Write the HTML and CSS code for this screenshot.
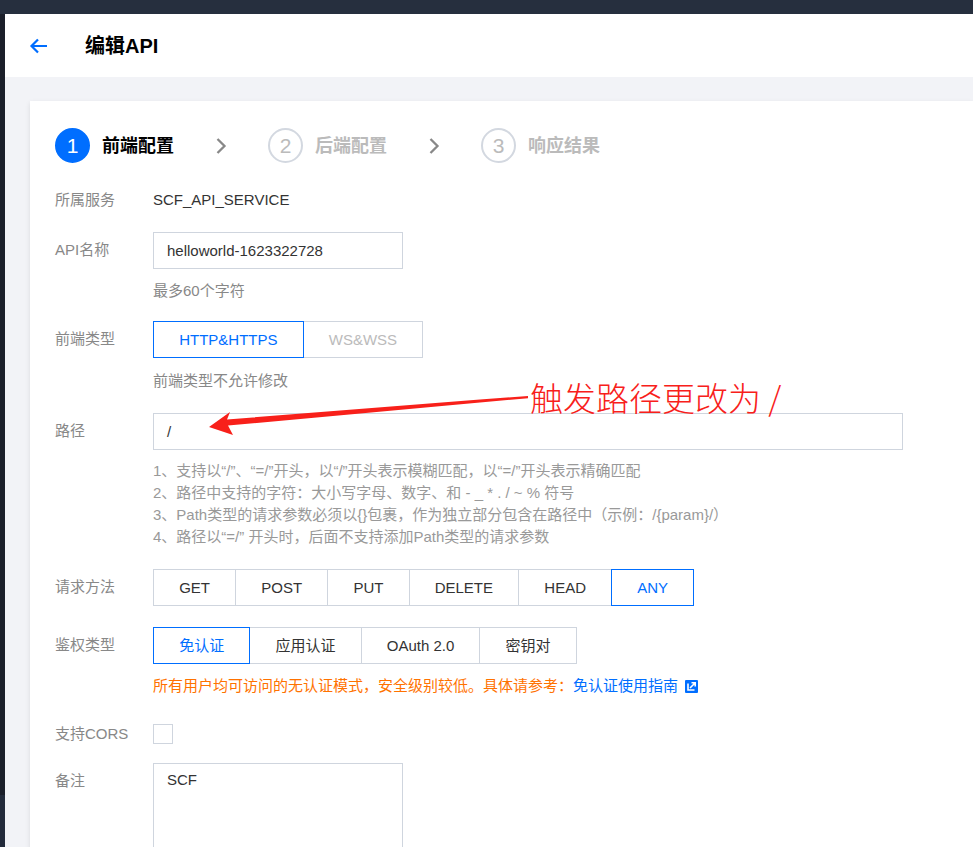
FILE: index.html
```html
<!DOCTYPE html>
<html lang="zh-CN">
<head>
<meta charset="utf-8">
<title>编辑API</title>
<link rel="stylesheet" href="styles.css">
</head>
<body>
<div class="topbar"></div>
<div class="main">
  <div class="strip"></div>
  <div class="content">
    <header class="header">
      <svg class="back" width="20" height="16" viewBox="0 0 20 16"><path d="M18 8H3M9 1.5L2.5 8L9 14.5" fill="none" stroke="#006eff" stroke-width="2.2"/></svg>
      <h1 class="title">编辑API</h1>
    </header>
    <div class="area">
      <div class="card">
        <div class="steps">
          <div class="step active"><span class="num">1</span><span class="stext">前端配置</span></div>
          <svg class="chev" width="12" height="18" viewBox="0 0 12 18"><path d="M2.5 2L9.5 9L2.5 16" fill="none" stroke="#888" stroke-width="2.3"/></svg>
          <div class="step"><span class="num">2</span><span class="stext">后端配置</span></div>
          <svg class="chev" width="12" height="18" viewBox="0 0 12 18"><path d="M2.5 2L9.5 9L2.5 16" fill="none" stroke="#888" stroke-width="2.3"/></svg>
          <div class="step"><span class="num">3</span><span class="stext">响应结果</span></div>
        </div>

        <div class="row r1">
          <div class="label">所属服务</div>
          <div class="ctrl"><div class="value">SCF_API_SERVICE</div></div>
        </div>

        <div class="row r2">
          <div class="label">API名称</div>
          <div class="ctrl">
            <div class="input w250">helloworld-1623322728</div>
            <div class="hint">最多60个字符</div>
          </div>
        </div>

        <div class="row r3">
          <div class="label">前端类型</div>
          <div class="ctrl">
            <div class="group">
              <span class="btn sel">HTTP&amp;HTTPS</span><span class="btn dis">WS&amp;WSS</span>
            </div>
            <div class="hint h12">前端类型不允许修改</div>
          </div>
        </div>

        <div class="row r4">
          <div class="label">路径</div>
          <div class="ctrl">
            <div class="input w750">/</div>
            <ul class="tips">
              <li>1、支持以“/”、“=/”开头，以“/”开头表示模糊匹配，以“=/”开头表示精确匹配</li>
              <li>2、路径中支持的字符：大小写字母、数字、和 - _ * . / ~ % 符号</li>
              <li>3、Path类型的请求参数必须以{}包裹，作为独立部分包含在路径中（示例：/{param}/）</li>
              <li>4、路径以“=/” 开头时，后面不支持添加Path类型的请求参数</li>
            </ul>
          </div>
        </div>

        <div class="row r5">
          <div class="label">请求方法</div>
          <div class="ctrl">
            <div class="group">
              <span class="btn">GET</span><span class="btn">POST</span><span class="btn">PUT</span><span class="btn">DELETE</span><span class="btn">HEAD</span><span class="btn sel">ANY</span>
            </div>
          </div>
        </div>

        <div class="row r6">
          <div class="label">鉴权类型</div>
          <div class="ctrl">
            <div class="group">
              <span class="btn sel">免认证</span><span class="btn">应用认证</span><span class="btn">OAuth 2.0</span><span class="btn">密钥对</span>
            </div>
            <div class="warn">所有用户均可访问的无认证模式，安全级别较低。具体请参考：<a class="link">免认证使用指南</a><svg class="ext" width="13" height="13" viewBox="0 0 13 13"><rect width="13" height="13" rx="1" fill="#006eff"/><path d="M3 3.5V10H9.5" fill="none" stroke="#fff" stroke-width="1.6"/><path d="M5 8L10 3M6.5 2.8H10.2V6.5" fill="none" stroke="#fff" stroke-width="1.6"/></svg></div>
          </div>
        </div>

        <div class="row r7">
          <div class="label">支持CORS</div>
          <div class="ctrl"><span class="checkbox"></span></div>
        </div>

        <div class="row r8">
          <div class="label">备注</div>
          <div class="ctrl"><div class="textarea">SCF</div></div>
        </div>
      </div>
    </div>
  </div>
</div>

<div class="note">
  <svg class="note-arrow" width="973" height="847" viewBox="0 0 973 847">
    <path d="M209 427 L230 412 L227 419.5 L480 399.5 L528 396 L528 398.2 L480 402.5 L228 425.5 L233 435 Z" fill="#f8201a"/>
  </svg>
  <div class="note-text">触发路径更改为 /</div>
</div>
</body>
</html>
```
FILE: styles.css
```css
* { box-sizing: border-box; }
html, body { margin: 0; padding: 0; }
body {
  background: #f2f3f7;
  font-family: "Liberation Sans", "Noto Sans CJK SC", sans-serif;
  font-size: 15px;
  color: #333;
  width: 973px;
  height: 847px;
  overflow: hidden;
  position: relative;
}
.topbar { height: 14px; background: #262f3e; }
.main { display: flex; height: 833px; overflow: hidden; }
.strip {
  width: 5px;
  flex-shrink: 0;
  background: linear-gradient(#1b1f2a 0, #1b1f2a 781px, #232b3b 781px);
}
.content { flex: 1; min-width: 0; }
.header {
  height: 63px;
  background: #fff;
  display: flex;
  align-items: center;
  padding-left: 24px;
}
.back { margin-right: 36px; }
.title {
  margin: 0;
  font-size: 20px;
  font-weight: 700;
  color: #000;
  line-height: 28px;
}
.area { padding: 24px 0 0 25px; }
.card {
  background: #fff;
  box-shadow: 0 2px 5px rgba(0, 0, 0, 0.10);
  padding: 27px 0 30px 25px;
  min-height: 740px;
}
.steps { display: flex; align-items: center; height: 35px; }
.step { display: flex; align-items: center; }
.num {
  width: 35px; height: 35px;
  border-radius: 50%;
  border: 2px solid #d3d8e0;
  display: flex; align-items: center; justify-content: center;
  font-size: 21px;
  color: #bbb;
  font-family: "Liberation Sans", sans-serif;
}
.stext {
  margin-left: 12px;
  font-size: 18px;
  font-weight: 700;
  color: #bbb;
  line-height: 24px;
}
.step.active .num { background: #006eff; border-color: #006eff; color: #fff; }
.step.active .stext { color: #000; }
.chev { margin: 0 41px 0 41px; }

.row { display: flex; }
.label {
  width: 98px;
  flex-shrink: 0;
  line-height: 36px;
  color: #888;
}
.ctrl { flex: 1; min-width: 0; }
.value { line-height: 36px; color: #333; }
.r1 { margin-top: 19px; margin-bottom: 14px; }
.r2 { margin-bottom: 19px; }
.r3 { margin-bottom: 21px; }
.r4 { margin-bottom: 21px; }
.r5 { margin-bottom: 21px; }
.r6 { margin-bottom: 19px; }
.r7 { margin-bottom: 11px; }

.input {
  height: 37px;
  border: 1px solid #cfd5de;
  padding: 0 13px;
  line-height: 35px;
  color: #333;
}
.w250 { width: 250px; }
.w750 { width: 750px; }
.hint { margin-top: 11px; line-height: 22px; color: #888; }
.h12 { margin-top: 12px; }
.group { display: flex; }
.btn {
  height: 37px;
  line-height: 35px;
  padding: 0 25.15px;
  border: 1px solid #cfd5de;
  margin-left: -1px;
  color: #333;
  background: #fff;
  position: relative;
}
.btn:first-child { margin-left: 0; }
.btn.sel { border-color: #006eff; color: #006eff; z-index: 1; }
.btn.dis { color: #bbb; }
.tips { list-style: none; margin: 10px 0 0; padding: 0; color: #999; line-height: 22px; }
.warn { margin-top: 11px; line-height: 22px; color: #ff7200; display: flex; align-items: center; }
.link { color: #006eff; text-decoration: none; }
.ext { margin-left: 7px; }
.checkbox {
  display: block;
  margin-top: 8px;
  width: 20px; height: 20px;
  border: 1px solid #cfd5de;
}
.textarea {
  width: 250px;
  height: 130px;
  border: 1px solid #cfd5de;
  padding: 5px 13px;
  line-height: 22px;
  color: #333;
}

.note-arrow { position: absolute; left: 0; top: 0; pointer-events: none; }
.note-text {
  position: absolute;
  left: 530px;
  top: 375px;
  font-family: "Noto Sans CJK SC", sans-serif;
  font-size: 33px;
  line-height: 44px;
  color: #f8201a;
  font-weight: 300;
  white-space: nowrap;
}
```
